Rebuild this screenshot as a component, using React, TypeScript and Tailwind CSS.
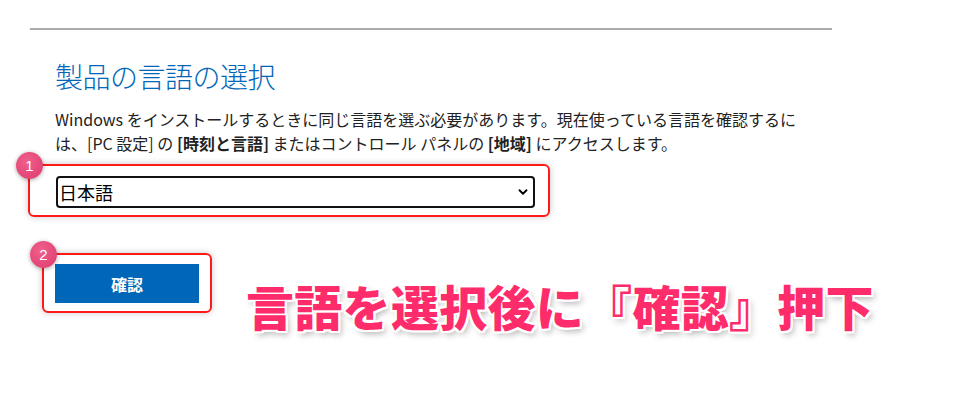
import { ChevronDown } from "lucide-react";

const jp = "font-['Noto_Sans_CJK_JP','Noto_Sans',sans-serif]";

function Badge({ n }: { n: number }) {
  return (
    <span className="absolute -left-[14px] -top-[14px] w-[27px] h-[27px] rounded-full bg-[radial-gradient(circle_at_40%_35%,#f0608c,#dc3a6c)] text-white text-[15px] leading-[27px] text-center font-['Liberation_Sans',sans-serif] shadow-[0_1px_4px_rgba(0,0,0,0.35)]">
      {n}
    </span>
  );
}

export default function App() {
  return (
    <div className={`w-[957px] h-[413px] bg-white ${jp} text-[#1a1a1a]`}>
      <div className="pt-[28px] pl-[30px]">
        <div className="w-[802px] h-[2px] bg-[#ababab]" />
      </div>

      <div className="pl-[55px]">
        <h2 className="mt-[28px] text-[28px] leading-[36px] font-light text-[#0067b8] tracking-[-0.5px]">
          製品の言語の選択
        </h2>

        <p className="mt-[13px] text-[16px] leading-[24px] text-[#222]">
          Windows をインストールするときに同じ言語を選ぶ必要があります。現在使っている言語を確認するに
          <br />
          は、[PC 設定] の <b>[時刻と言語]</b> またはコントロール パネルの <b>[地域]</b> にアクセスします。
        </p>

        {/* step 1 */}
        <div className="relative mt-[9px] -ml-[27px] w-[522px] border-2 border-[#ff1a1a] rounded-[6px] pl-[26px] pr-[13px] pt-[10px] pb-[7px] shadow-[0_0_7px_rgba(0,0,0,0.22)]">
          <Badge n={1} />
          <div className="relative">
            <select className="w-full h-[32px] appearance-none border-2 border-[#111] rounded-[4px] pl-[1px] text-[18px] leading-[28px] text-black bg-white outline-none">
              <option>日本語</option>
            </select>
            <ChevronDown className="absolute right-[5px] top-[9px] w-[14px] h-[14px] text-black pointer-events-none" strokeWidth={3.2} />
          </div>
        </div>

        {/* step 2 */}
        <div className="mt-[36px] -ml-[13px] flex items-start">
          <div className="relative w-[170px] border-2 border-[#ff1a1a] rounded-[6px] pl-[11px] pr-[11px] pt-[9px] pb-[8px] shadow-[0_0_7px_rgba(0,0,0,0.22)]">
            <Badge n={2} />
            <button className="w-[144px] h-[39px] bg-[#0067b8] text-white text-[16px] font-bold">
              確認
            </button>
          </div>
          <div className="ml-[34px] mt-[24px] text-[48px] leading-[56px] font-black text-[#ff2c6c] tracking-[0.3px] [text-shadow:2px_0_0_#fff,-2px_0_0_#fff,0_2px_0_#fff,0_-2px_0_#fff,2px_2px_0_#fff,-2px_-2px_0_#fff,2px_-2px_0_#fff,-2px_2px_0_#fff,3px_4px_6px_rgba(0,0,0,0.3)]">
            言語を選択後に『確認』押下
          </div>
        </div>
      </div>
    </div>
  );
}
